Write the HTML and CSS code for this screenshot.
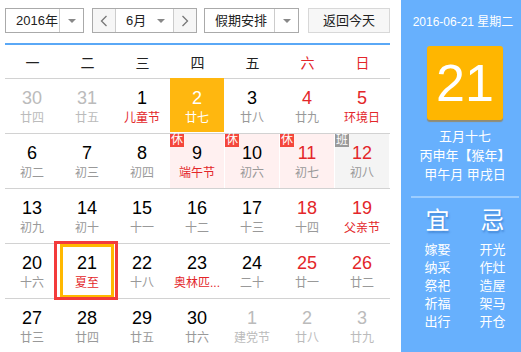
FILE: index.html
```html
<!DOCTYPE html>
<html lang="zh-CN">
<head>
<meta charset="utf-8">
<title>万年历</title>
<link rel="stylesheet" href="styles.css">
</head>
<body>
<div class="app">
  <div class="main">
    <div class="toolbar">
      <div class="sel year">
        <span class="sel-text">2016年</span>
        <span class="sel-arrow"><i class="tri"></i></span>
      </div>
      <div class="sel month">
        <span class="nav"><svg width="8" height="12" viewBox="0 0 8 12"><polyline points="6.5,1 1.5,6 6.5,11" fill="none" stroke="#777" stroke-width="1.3"/></svg></span>
        <span class="month-mid"><span>6月</span><i class="tri"></i></span>
        <span class="nav"><svg width="8" height="12" viewBox="0 0 8 12"><polyline points="1.5,1 6.5,6 1.5,11" fill="none" stroke="#777" stroke-width="1.3"/></svg></span>
      </div>
      <div class="sel holiday">
        <span class="sel-text">假期安排</span>
        <span class="sel-arrow"><i class="tri"></i></span>
      </div>
      <div class="btn">返回今天</div>
    </div>

    <div class="cal">
      <div class="weekdays">
        <span>一</span><span>二</span><span>三</span><span>四</span><span>五</span><span class="we">六</span><span class="we">日</span>
      </div>
      <div class="week">
        <div class="day other"><span class="num">30</span><span class="lunar">廿四</span></div>
        <div class="day other"><span class="num">31</span><span class="lunar">廿五</span></div>
        <div class="day"><span class="num">1</span><span class="lunar fest">儿童节</span></div>
        <div class="day picked"><span class="num">2</span><span class="lunar">廿七</span></div>
        <div class="day"><span class="num">3</span><span class="lunar">廿八</span></div>
        <div class="day we"><span class="num">4</span><span class="lunar">廿九</span></div>
        <div class="day we"><span class="num">5</span><span class="lunar fest">环境日</span></div>
      </div>
      <div class="week">
        <div class="day"><span class="num">6</span><span class="lunar">初二</span></div>
        <div class="day"><span class="num">7</span><span class="lunar">初三</span></div>
        <div class="day"><span class="num">8</span><span class="lunar">初四</span></div>
        <div class="day rest"><span class="tag">休</span><span class="num">9</span><span class="lunar fest">端午节</span></div>
        <div class="day rest"><span class="tag">休</span><span class="num">10</span><span class="lunar">初六</span></div>
        <div class="day rest we"><span class="tag">休</span><span class="num">11</span><span class="lunar">初七</span></div>
        <div class="day work we"><span class="tag">班</span><span class="num">12</span><span class="lunar">初八</span></div>
      </div>
      <div class="week">
        <div class="day"><span class="num">13</span><span class="lunar">初九</span></div>
        <div class="day"><span class="num">14</span><span class="lunar">初十</span></div>
        <div class="day"><span class="num">15</span><span class="lunar">十一</span></div>
        <div class="day"><span class="num">16</span><span class="lunar">十二</span></div>
        <div class="day"><span class="num">17</span><span class="lunar">十三</span></div>
        <div class="day we"><span class="num">18</span><span class="lunar">十四</span></div>
        <div class="day we"><span class="num">19</span><span class="lunar fest">父亲节</span></div>
      </div>
      <div class="week">
        <div class="day"><span class="num">20</span><span class="lunar">十六</span></div>
        <div class="day today"><span class="num">21</span><span class="lunar fest">夏至</span></div>
        <div class="day"><span class="num">22</span><span class="lunar">十八</span></div>
        <div class="day"><span class="num">23</span><span class="lunar fest short">奥林匹...</span></div>
        <div class="day"><span class="num">24</span><span class="lunar">二十</span></div>
        <div class="day we"><span class="num">25</span><span class="lunar">廿一</span></div>
        <div class="day we"><span class="num">26</span><span class="lunar">廿二</span></div>
      </div>
      <div class="week">
        <div class="day"><span class="num">27</span><span class="lunar">廿三</span></div>
        <div class="day"><span class="num">28</span><span class="lunar">廿四</span></div>
        <div class="day"><span class="num">29</span><span class="lunar">廿五</span></div>
        <div class="day"><span class="num">30</span><span class="lunar">廿六</span></div>
        <div class="day other"><span class="num">1</span><span class="lunar">建党节</span></div>
        <div class="day other"><span class="num">2</span><span class="lunar">廿八</span></div>
        <div class="day other"><span class="num">3</span><span class="lunar">廿九</span></div>
      </div>
    </div>
  </div>

  <aside class="side">
    <div class="side-date">2016-06-21 星期二</div>
    <div class="side-big">21</div>
    <div class="side-lunar">
      <div>五月十七</div>
      <div>丙申年【猴年】</div>
      <div>甲午月 甲戌日</div>
    </div>
    <div class="side-sep"></div>
    <div class="yiji">
      <div class="yiji-col">
        <div class="yiji-head">宜</div>
        <div>嫁娶</div><div>纳采</div><div>祭祀</div><div>祈福</div><div>出行</div>
      </div>
      <div class="yiji-col">
        <div class="yiji-head">忌</div>
        <div>开光</div><div>作灶</div><div>造屋</div><div>架马</div><div>开仓</div>
      </div>
    </div>
  </aside>
</div>
</body>
</html>
```

FILE: styles.css
```css
html, body {
  margin: 0;
  padding: 0;
  background: #fff;
}
body {
  font-family: "Liberation Sans", Arial, "Noto Sans CJK SC", sans-serif;
  color: #000;
  width: 521px;
  height: 352px;
  overflow: hidden;
}
.app {
  display: flex;
  width: 521px;
  height: 352px;
  overflow: hidden;
}
.main {
  width: 401px;
  flex: none;
  box-sizing: border-box;
  padding: 8px 0 0 5px;
}

/* toolbar */
.toolbar {
  display: flex;
  height: 25px;
}
.sel {
  display: flex;
  box-sizing: border-box;
  height: 25px;
  border: 1px solid #aaa;
  background: #fff;
  font-size: 13px;
  color: #222;
}
.sel-text {
  flex: 1;
  line-height: 23px;
  padding-left: 10px;
  white-space: nowrap;
}
.sel-arrow {
  width: 23px;
  border-left: 1px solid #ccc;
  display: flex;
  align-items: center;
  justify-content: center;
}
.tri {
  display: inline-block;
  width: 0;
  height: 0;
  border-left: 4px solid transparent;
  border-right: 4px solid transparent;
  border-top: 4px solid #888;
}
.year {
  width: 79px;
}
.month {
  width: 105px;
  margin-left: 8px;
}
.nav {
  width: 22px;
  background: #f6f6f6;
  display: flex;
  align-items: center;
  justify-content: center;
}
.nav:first-child {
  border-right: 1px solid #ccc;
}
.nav:last-child {
  border-left: 1px solid #ccc;
}
.month-mid {
  flex: 1;
  display: flex;
  align-items: center;
  justify-content: space-between;
  padding: 0 8px 0 10px;
  line-height: 23px;
}
.holiday {
  width: 95px;
  margin-left: 7px;
}
.btn {
  width: 82px;
  height: 25px;
  box-sizing: border-box;
  margin-left: 9px;
  border: 1px solid #d8d8d8;
  background: #f7f7f7;
  font-size: 13px;
  line-height: 23px;
  text-align: center;
  color: #222;
}

/* calendar */
.cal {
  width: 385px;
  margin-top: 10px;
  border-top: 2px solid #5aa8f6;
}
.weekdays {
  display: grid;
  grid-template-columns: repeat(7, 55px);
  height: 33px;
  border-bottom: 1px solid #d2d2d2;
  align-items: center;
  text-align: center;
  font-size: 14px;
  color: #222;
}
.weekdays .we {
  color: #e3262a;
}
.week {
  display: grid;
  grid-template-columns: repeat(7, 54px);
  column-gap: 1px;
  height: 54px;
  border-bottom: 1px solid #d2d2d2;
}
.day {
  position: relative;
  box-sizing: border-box;
  padding-top: 9px;
  text-align: center;
}
.num {
  display: block;
  font-size: 18px;
  line-height: 20px;
  color: #000;
}
.lunar {
  display: block;
  margin-top: 2px;
  font-size: 12px;
  line-height: 16px;
  color: #999;
  white-space: nowrap;
}
.day.we .num {
  color: #e3262a;
}
.lunar.fest {
  color: #e3262a;
}
.day.other .num,
.day.other .lunar {
  color: #bbb;
}
.day.picked {
  background: #ffb70f;
  margin-top: -1px;
  height: 54px;
  padding-top: 10px;
}
.day.picked .num,
.day.picked .lunar {
  color: #fff;
}
.day.rest {
  background: #fff0f0;
}
.day.work {
  background: #f4f4f4;
}
.tag {
  position: absolute;
  top: 0;
  left: 0;
  width: 14px;
  height: 13px;
  background: #f4473b;
  color: #fff;
  font-size: 12px;
  line-height: 13px;
  text-align: center;
}
.day.work .tag {
  background: #9a9a9a;
}
.day.today {
  border: 3px solid #ffb800;
  padding-top: 6px;
}
.day.today::after {
  content: "";
  position: absolute;
  top: -6px;
  left: -9px;
  right: -7px;
  bottom: -5px;
  border: 3px solid #f33b3b;
}

/* side panel */
.side {
  width: 128px;
  flex: none;
  background: #67b0fd;
  color: #fff;
  text-align: center;
}
.side-date {
  margin-top: 14px;
  font-size: 12px;
  line-height: 16px;
  white-space: nowrap;
  padding-right: 4px;
}
.side-big {
  width: 76px;
  height: 74px;
  margin: 16px auto 0;
  background: #ffb600;
  border-radius: 3px;
  box-shadow: 0 2px 1px rgba(180, 110, 0, 0.55);
  font-size: 52px;
  line-height: 74px;
}
.side-lunar {
  margin-top: 7px;
  font-size: 13px;
  line-height: 19px;
  white-space: nowrap;
}
.side-sep {
  margin: 12px 10px 0;
  height: 2px;
  background: #9ccdff;
}
.yiji {
  display: flex;
  justify-content: center;
  gap: 11px;
  margin-top: 8px;
}
.yiji-col {
  width: 44px;
  font-size: 13px;
  line-height: 18px;
}
.yiji-head {
  font-size: 24px;
  line-height: 30px;
  margin-bottom: 5px;
  text-shadow: 1px 2px 2px rgba(0, 60, 140, 0.35);
}
```
